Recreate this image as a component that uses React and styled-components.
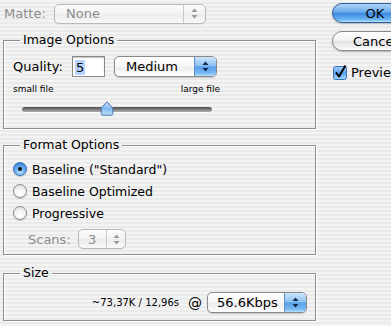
import React from 'react';
import styled, {createGlobalStyle, css} from 'styled-components';

const GlobalStyle = createGlobalStyle`
  html, body {
    margin: 0;
    padding: 0;
    overflow: hidden;
  }
  body {
    font-family: "DejaVu Sans", "Liberation Sans", sans-serif;
    font-size: 12px;
    color: #000;
  }
`;

// aqua pinstripe, fixed so that titles laid over borders line up with it
const pinstripe = css`
  background: repeating-linear-gradient(to bottom, #f3f3f3 0px, #f3f3f3 2px, #eaeaea 2px, #eaeaea 4px);
  background-attachment: fixed;
`;

const Window = styled.div`
  ${pinstripe}
  width: 391px;
  height: 326px;
  box-sizing: border-box;
  padding: 3px 0 0 3px;
  display: flex;
  overflow: hidden;
`;

const Main = styled.div`
  width: 313px;
  flex-shrink: 0;
  display: flex;
  flex-direction: column;
`;

const Side = styled.div`
  margin-left: 16px;
  flex-shrink: 0;
  display: flex;
  flex-direction: column;
`;

const MatteRow = styled.div`
  display: flex;
  align-items: center;
  height: 21px;
`;

const Label = styled.span`
  color: ${p => (p.disabled ? '#8c8c8c' : '#000')};
  width: ${p => p.width || 'auto'};
  padding-left: ${p => p.indent || '0px'};
  font-size: 13px;
  flex-shrink: 0;
  white-space: nowrap;
`;

const Group = styled.div`
  position: relative;
  box-sizing: border-box;
  height: ${p => p.height}px;
  margin-top: ${p => p.top}px;
  border: 1px solid #8e8e8e;
  box-shadow: inset 1px 1px 0 #fff, 1px 1px 0 #fff;
  padding: ${p => p.pad || '0'};
`;

const GroupTitle = styled.div`
  ${pinstripe}
  position: absolute;
  top: -9px;
  left: 16px;
  padding: 0 3px;
  font-size: 12.5px;
  line-height: 16px;
`;

const Row = styled.div`
  display: flex;
  align-items: center;
  height: ${p => p.height || 21}px;
  margin-top: ${p => p.top || 0}px;
  justify-content: ${p => p.justify || 'flex-start'};
`;

const TextField = styled.div`
  box-sizing: border-box;
  width: 33px;
  height: 21px;
  margin-right: 9px;
  background: #fff;
  border: 1px solid #8a8a8a;
  box-shadow: inset 0 1px 1px rgba(0, 0, 0, 0.25);
  padding: 1px 0 0 2px;
  display: flex;
  align-items: center;
  font-size: 13px;
`;

const Selected = styled.span`
  background: #b5d5ff;
  padding: 0 1px;
`;

const PopupBox = styled.div`
  box-sizing: border-box;
  width: ${p => p.width}px;
  height: ${p => p.height || 21}px;
  flex-shrink: 0;
  display: flex;
  border: 1px solid ${p => (p.disabled ? '#b8b8b8' : '#8a8a8a')};
  border-radius: 5px;
  overflow: hidden;
  background: ${p =>
    p.disabled
      ? 'linear-gradient(#fbfbfb, #f3f3f3 50%, #ececec 51%, #f8f8f8)'
      : 'linear-gradient(#ffffff, #f6f6f6 50%, #ebebeb 51%, #ffffff)'};
  box-shadow: 0 1px 1px rgba(0, 0, 0, ${p => (p.disabled ? 0.06 : 0.18)});
`;

const PopupText = styled.div`
  flex: 1;
  display: flex;
  align-items: center;
  padding-left: ${p => p.pad || 12}px;
  font-size: 13px;
  color: ${p => (p.disabled ? '#8c8c8c' : '#000')};
  white-space: nowrap;
`;

const Arrows = styled.div`
  width: ${p => p.w || 21}px;
  display: flex;
  align-items: center;
  justify-content: center;
  border-left: 1px solid ${p => (p.disabled ? '#c8c8c8' : '#5b8fd0')};
  background: ${p =>
    p.disabled
      ? 'transparent'
      : 'linear-gradient(#cfe5fb, #8ec2f3 45%, #5aa0ec 52%, #78b9f3 85%, #b5e0fc)'};
`;

const ArrowIcon = ({color}) => (
  <svg width="7" height="11" viewBox="0 0 7 11">
    <path d="M3.5 0.5 L6.5 4 L0.5 4 Z" fill={color} />
    <path d="M3.5 10.5 L6.5 7 L0.5 7 Z" fill={color} />
  </svg>
);

const Popup = ({children, width, height, disabled, pad, arrowWidth}) => (
  <PopupBox width={width} height={height} disabled={disabled}>
    <PopupText disabled={disabled} pad={pad}>{children}</PopupText>
    <Arrows disabled={disabled} w={arrowWidth}>
      <ArrowIcon color={disabled ? '#9a9a9a' : '#10284a'} />
    </Arrows>
  </PopupBox>
);

const SliderLabels = styled.div`
  width: 207px;
  display: flex;
  justify-content: space-between;
  font-size: 9px;
  line-height: 11px;
  margin-top: 7px;
`;

const Slider = styled.div`
  position: relative;
  width: 190px;
  height: 16px;
  margin: 6px 0 0 9px;
  display: flex;
  align-items: center;
`;

const Track = styled.div`
  width: 100%;
  height: 5px;
  border-radius: 3px;
  background: linear-gradient(#4a4a4a, #8a8a8a 60%, #b0b0b0);
  box-shadow: 0 1px 0 rgba(255, 255, 255, 0.8);
`;

const Thumb = styled.svg`
  position: absolute;
  left: 78px;
  top: 0;
`;

const RadioRow = styled.div`
  display: flex;
  align-items: center;
  height: 22px;
  gap: 5px;
  font-size: 12.5px;
`;

const RadioDot = styled.div`
  box-sizing: border-box;
  width: 14px;
  height: 14px;
  border-radius: 50%;
  display: flex;
  align-items: center;
  justify-content: center;
  border: 1px solid ${p => (p.checked ? '#3a6fb6' : '#8a8a8a')};
  background: ${p =>
    p.checked
      ? 'radial-gradient(circle at 50% 75%, #b8e4fd 0%, #6aaef0 45%, #3b86dc 80%)'
      : 'radial-gradient(circle at 50% 75%, #ffffff 0%, #f2f2f2 50%, #d6d6d6 100%)'};
  box-shadow: 0 1px 1px rgba(0, 0, 0, 0.2);

  &::after {
    content: '';
    display: ${p => (p.checked ? 'block' : 'none')};
    width: 4px;
    height: 4px;
    border-radius: 50%;
    background: #111;
  }
`;

const Radio = ({checked, children}) => (
  <RadioRow>
    <RadioDot checked={checked} />
    <span>{children}</span>
  </RadioRow>
);

const SizeText = styled.span`
  font-size: 10px;
  margin-right: 9px;
`;

const At = styled.span`
  font-size: 14px;
  margin-right: 5px;
`;

const PushButton = styled.div`
  box-sizing: border-box;
  width: 86px;
  height: 20px;
  border-radius: 10px;
  display: flex;
  align-items: center;
  justify-content: center;
  font-size: 13px;
  margin-bottom: ${p => p.gap || 0}px;
  border: 1px solid ${p => (p.primary ? '#2f5d9f' : '#8a8a8a')};
  background: ${p =>
    p.primary
      ? 'linear-gradient(#b2d5f8, #6aa9ec 45%, #3c89e2 52%, #69b1f1 85%, #b8e6fd)'
      : 'linear-gradient(#ffffff, #f5f5f5 45%, #e2e2e2 52%, #f2f2f2 85%, #ffffff)'};
  box-shadow: 0 1px 2px rgba(0, 0, 0, 0.25);
`;

const CheckRow = styled.div`
  display: flex;
  align-items: center;
  gap: 4px;
  font-size: 13px;
  margin-left: 1px;
`;

const CheckIcon = () => (
  <svg width="14" height="15" viewBox="0 0 14 15">
    <defs>
      <linearGradient id="cb" x1="0" y1="0" x2="0" y2="1">
        <stop offset="0" stopColor="#a9d2f8" />
        <stop offset="0.5" stopColor="#5aa0ec" />
        <stop offset="1" stopColor="#a4dcfc" />
      </linearGradient>
    </defs>
    <rect x="0.5" y="1.5" width="13" height="13" rx="2" fill="url(#cb)" stroke="#3a6fb6" />
    <path d="M3 7.5 L6 11.5 L12.5 0.5" fill="none" stroke="#000" strokeWidth="2" strokeLinejoin="round" />
  </svg>
);

const App = () => (
  <>
    <GlobalStyle />
    <Window>
      <Main>
        <MatteRow>
          <Label disabled width="50px" indent="1px">Matte:</Label>
          <Popup width={152} height={20} disabled pad={11}>None</Popup>
        </MatteRow>

        <Group top={16} height={89} pad="15px 0 0 9px">
          <GroupTitle>Image Options</GroupTitle>
          <Row>
            <Label width="59px">Quality:</Label>
            <TextField><Selected>5</Selected></TextField>
            <Popup width={103} pad={11}>Medium</Popup>
          </Row>
          <SliderLabels>
            <span>small file</span>
            <span>large file</span>
          </SliderLabels>
          <Slider>
            <Track />
            <Thumb width="14" height="15" viewBox="0 0 14 15">
              <defs>
                <linearGradient id="th" x1="0" y1="0" x2="0" y2="1">
                  <stop offset="0" stopColor="#d6e9fc" />
                  <stop offset="0.5" stopColor="#7fb6ee" />
                  <stop offset="1" stopColor="#bfe6fd" />
                </linearGradient>
              </defs>
              <path d="M7 0.8 L12.8 7 L12.8 12.5 Q12.8 14.2 11 14.2 L3 14.2 Q1.2 14.2 1.2 12.5 L1.2 7 Z" fill="url(#th)" stroke="#4c72a8" />
            </Thumb>
          </Slider>
        </Group>

        <Group top={16} height={110} pad="12px 0 0 9px">
          <GroupTitle>Format Options</GroupTitle>
          <Radio checked>Baseline ("Standard")</Radio>
          <Radio>Baseline Optimized</Radio>
          <Radio>Progressive</Radio>
          <Row height={20} top={5}>
            <Label disabled width="50px" indent="15px">Scans:</Label>
            <Popup width={48} height={20} disabled pad={9} arrowWidth={18}>3</Popup>
          </Row>
        </Group>

        <Group top={18} height={48} pad="18px 8px 0 0">
          <GroupTitle>Size</GroupTitle>
          <Row justify="flex-end">
            <SizeText>~73,37K / 12,96s</SizeText>
            <At>@</At>
            <Popup width={100} pad={9}>56.6Kbps</Popup>
          </Row>
        </Group>
      </Main>

      <Side>
        <PushButton primary gap={8}>OK</PushButton>
        <PushButton gap={14}>Cancel</PushButton>
        <CheckRow>
          <CheckIcon />
          <span>Preview</span>
        </CheckRow>
      </Side>
    </Window>
  </>
);

export default App;
